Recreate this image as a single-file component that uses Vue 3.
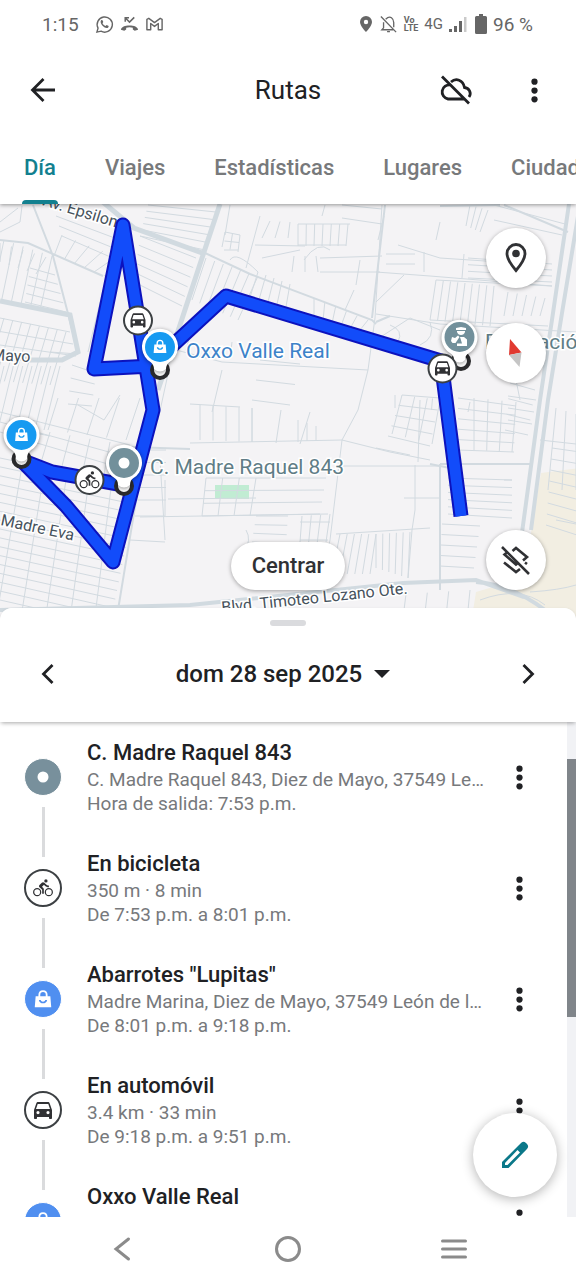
<script setup>
import { ref } from 'vue'

const tabs = ['Día', 'Viajes', 'Estadísticas', 'Lugares', 'Ciudades']
const activeTab = ref('Día')

const stops = [
  { kind: 'place', title: 'C. Madre Raquel 843', detail: 'C. Madre Raquel 843, Diez de Mayo, 37549 Le…', time: 'Hora de salida: 7:53 p.m.' },
  { kind: 'bike', title: 'En bicicleta', detail: '350 m · 8 min', time: 'De 7:53 p.m. a 8:01 p.m.' },
  { kind: 'shop', title: 'Abarrotes "Lupitas"', detail: 'Madre Marina, Diez de Mayo, 37549 León de l…', time: 'De 8:01 p.m. a 9:18 p.m.' },
  { kind: 'car', title: 'En automóvil', detail: '3.4 km · 33 min', time: 'De 9:18 p.m. a 9:51 p.m.' },
  { kind: 'shop', title: 'Oxxo Valle Real', detail: '', time: '' }
]

// Parallel streets: n lines joining segment a-b to segment c-d.
function hatch([ax, ay, bx, by, cx, cy, dx, dy, n]) {
  let path = ''
  for (let i = 0; i < n; i++) {
    const t = n > 1 ? i / (n - 1) : 0
    const p = (u, v) => Math.round((u + (v - u) * t) * 10) / 10
    path += `M${p(ax, bx)} ${p(ay, by)}L${p(cx, dx)} ${p(cy, dy)}`
  }
  return path
}

const streets = [
  [0, 243, 46, 257, 0, 262, 36, 274, 5],
  [4, 240, 52, 256, -8, 298, 40, 310, 6],
  [30, 268, 25, 302, 55, 275, 66, 312, 5],
  [62, 235, 130, 262, 54, 256, 104, 276, 6],
  [56, 216, 62, 236, 120, 240, 122, 262, 3],
  [140, 236, 134, 282, 196, 258, 182, 306, 6],
  [140, 236, 148, 205, 205, 250, 216, 212, 6],
  [172, 205, 165, 240, 172, 205, 165, 240, 1],
  [4, 318, 66, 332, -14, 380, 50, 385, 8],
  [0, 318, 0, 345, 70, 332, 76, 356, 3],
  [50, 352, 20, 430, 78, 354, 50, 436, 2],
  [4, 366, 60, 366, -10, 424, 44, 430, 7],
  [72, 365, 68, 404, 96, 373, 92, 406, 4],
  [0, 412, 0, 432, 130, 445, 128, 470, 3],
  [58, 398, 140, 398, 48, 430, 126, 440, 5],
  [50, 432, 110, 442, 40, 466, 104, 474, 4],
  [0, 458, 0, 600, 138, 487, 110, 625, 17],
  [22, 466, 112, 480, -2, 608, 96, 608, 5],
  [137, 450, 130, 500, 166, 450, 166, 500, 5],
  [135, 516, 130, 540, 165, 516, 165, 542, 2],
  [206, 258, 258, 276, 192, 300, 238, 320, 7],
  [258, 272, 290, 284, 246, 310, 284, 318, 5],
  [314, 298, 368, 320, 314, 316, 360, 330, 6],
  [225, 232, 224, 250, 240, 235, 238, 250, 3],
  [225, 232, 240, 235, 222, 247, 238, 252, 3],
  [270, 221, 290, 222, 262, 238, 288, 238, 3],
  [298, 224, 348, 224, 298, 246, 346, 246, 7],
  [298, 224, 298, 245, 350, 224, 346, 245, 2],
  [255, 245, 262, 258, 305, 246, 300, 250, 2],
  [294, 256, 316, 256, 292, 272, 318, 272, 3],
  [320, 258, 320, 272, 382, 256, 380, 272, 2],
  [342, 205, 342, 218, 382, 209, 382, 224, 2],
  [190, 335, 232, 342, 186, 350, 230, 358, 2],
  [436, 280, 494, 286, 430, 320, 490, 326, 9],
  [436, 280, 430, 320, 552, 286, 548, 326, 2],
  [508, 292, 545, 298, 504, 316, 540, 316, 5],
  [384, 216, 440, 222, 378, 240, 436, 240, 2],
  [386, 254, 386, 264, 415, 254, 415, 264, 2],
  [424, 252, 464, 254, 424, 272, 462, 278, 2],
  [468, 258, 468, 278, 552, 264, 552, 282, 4],
  [470, 205, 488, 210, 466, 226, 480, 232, 4],
  [494, 205, 494, 220, 565, 224, 562, 235, 2],
  [402, 395, 388, 436, 440, 398, 430, 446, 5],
  [402, 395, 440, 400, 392, 434, 432, 444, 4],
  [458, 398, 458, 450, 516, 406, 514, 452, 6],
  [474, 398, 516, 402, 474, 450, 512, 452, 4],
  [508, 396, 508, 420, 536, 400, 532, 424, 3],
  [448, 478, 448, 514, 512, 480, 512, 518, 6],
  [504, 480, 504, 516, 512, 480, 512, 517, 1],
  [442, 524, 440, 566, 480, 526, 474, 568, 5],
  [376, 534, 410, 532, 376, 568, 408, 578, 6],
  [340, 534, 376, 534, 332, 574, 370, 574, 6],
  [256, 516, 252, 542, 288, 516, 286, 544, 4],
  [302, 516, 330, 514, 300, 542, 326, 542, 4],
  [300, 522, 300, 540, 330, 522, 328, 540, 2],
  [206, 478, 256, 478, 202, 516, 250, 516, 4],
  [206, 478, 202, 516, 326, 478, 320, 514, 4],
  [200, 405, 252, 408, 200, 440, 252, 442, 5],
  [252, 408, 310, 412, 252, 442, 300, 444, 3],
  [298, 420, 316, 426, 298, 442, 316, 440, 3],
  [556, 408, 576, 414, 548, 490, 576, 490, 3],
  [552, 448, 546, 525, 580, 452, 580, 536, 8],
  [406, 594, 470, 590, 404, 610, 468, 610, 4],
  [260, 360, 252, 400, 300, 364, 290, 405, 3],
  [395, 395, 470, 402, 395, 408, 468, 412, 3],
  [510, 383, 505, 430, 535, 390, 528, 435, 4]
].map(hatch).join('')
</script>

<template>
  <div class="screen">
    <svg class="defs" aria-hidden="true">
      <symbol id="i-car" viewBox="0 0 24 24">
        <path fill-rule="evenodd" d="M18.92 6.01C18.72 5.42 18.16 4 17.5 4h-11c-.66 0-1.21 1.42-1.42 2.01L3 12v8c0 .55.45 1 1 1h1c.55 0 1-.45 1-1v-1h12v1c0 .55.45 1 1 1h1c.55 0 1-.45 1-1v-8zM7 16.2a1.6 1.6 0 1 1 0-3.2 1.6 1.6 0 0 1 0 3.2zm10 0a1.6 1.6 0 1 1 0-3.2 1.6 1.6 0 0 1 0 3.2zM5 11l1.7-5h10.6L19 11z" />
      </symbol>
      <symbol id="i-bike" viewBox="0 0 24 24">
        <circle cx="15.5" cy="3.5" r="2" />
        <g fill="none" stroke="currentColor" stroke-width="1.5"><circle cx="5" cy="17" r="4.2" /><circle cx="19" cy="17" r="4.2" /></g>
        <path d="M10.8 10.5l2.4-2.4.8.8c1.3 1.3 3 2.1 5.1 2.1V9c-1.5 0-2.7-.6-3.6-1.5l-1.9-1.9c-.5-.4-1-.6-1.6-.6s-1.1.2-1.4.6L7.8 8.4c-.4.4-.6.9-.6 1.4 0 .6.2 1.1.6 1.4L11 14v5h2v-6.2z" />
      </symbol>
      <symbol id="i-bag" viewBox="0 0 24 24">
        <path fill="none" stroke="currentColor" stroke-width="2" d="M8 10V7.5C8 2 16 2 16 7.5V10" />
        <path fill-rule="evenodd" d="M4 9h16l1 12H3zM7.500 13c.5 5 8.500 5 9 0h-2c-.5 2.500-4.500 2.500-5 0z" />
      </symbol>
      <symbol id="i-dots" viewBox="0 0 24 24">
        <circle cx="12" cy="3.5" r="3" /><circle cx="12" cy="12" r="3" /><circle cx="12" cy="20.5" r="3" />
      </symbol>
      <symbol id="i-chevron" viewBox="0 0 24 24">
        <path fill="none" stroke="currentColor" stroke-width="2.8" d="M16.5 3L7.5 12l9 9" />
      </symbol>
    </svg>

    <header class="status">
      <span>1:15</span>
      <svg class="st-icon wa" viewBox="0 0 20 20"><path fill="none" stroke="currentColor" stroke-width="1.5" d="M2 18l1.200-4.200A8 8 0 1 1 6.300 17z" /><path d="M6.300 5.800c.7-.8 1.500-.6 1.800.1l.6 1.500-.8 1.200c.8 1.500 1.800 2.300 3.200 3l1.100-1 1.700.8c.7.3.6 1.300-.2 1.900-3 2-9.400-4.300-7.400-7.500z" /></svg>
      <svg class="st-icon" viewBox="0 0 20 20"><path d="M1 15.500c0-6 18-6 18 0l-3.500 1.200-2-1.500v-1.800c-2-.8-5-.8-7 0v1.800l-2 1.500z" /><path fill="none" stroke="currentColor" stroke-width="1.6" d="M5.500 7V3H9.500M6 3.500l4 4 5-5" /></svg>
      <svg class="st-icon" viewBox="0 0 20 20"><path fill="none" stroke="currentColor" stroke-width="1.5" stroke-linejoin="round" d="M2 15.500V4.500L4 3.500l6 4.500 6-4.500 2 1v11h-4V9l-4 3-4-3v6.500z" /></svg>
      <span class="spacer"></span>
      <svg class="pin-icon" viewBox="0 0 14 18"><path fill-rule="evenodd" d="M7 1a6 6 0 0 0-6 6c0 4 6 10 6 10s6-6 6-10a6 6 0 0 0-6-6zm0 3.800a2.200 2.200 0 1 1 0 4.400 2.200 2.200 0 0 1 0-4.400z" /></svg>
      <svg class="st-icon bell" viewBox="0 0 20 20"><path fill="none" stroke="currentColor" stroke-width="1.4" d="M2 1.500L18 18M7 4.500C12-.5 15.500 4 15.500 8v5M4.800 7.500v6L3 15.500h12M8.500 17.500h3" /></svg>
      <span class="volte"><b>Vo</b><b>LTE</b></span>
      <span class="net">4G</span>
      <svg class="signal" viewBox="0 0 18 16"><path d="M0 13h3v3H0zM5 10h3v6H5zM10 5h3v11h-3z" /><path opacity=".35" d="M15 1h2.500v15H15z" /></svg>
      <svg class="battery" viewBox="0 0 12 20"><path d="M4 0h4v2h2.500Q12 2 12 3.500v15Q12 20 10.500 20h-9Q0 20 0 18.500v-15Q0 2 1.500 2H4z" /></svg>
      <span>96 %</span>
    </header>

    <div class="appbar">
      <button class="icon-btn" aria-label="Atrás">
        <svg width="28" height="28" viewBox="0 0 28 28" fill="none" stroke="currentColor" stroke-width="2.8"><path d="M26 14H4M14.500 3L3.500 14l11 11" /></svg>
      </button>
      <h1>Rutas</h1>
      <button class="icon-btn cloud" aria-label="Sin conexión">
        <svg width="34" height="32" viewBox="0 0 34 32" fill="none" stroke="currentColor" stroke-width="2.8"><path d="M3 2.500l27 27M11.500 11A7 7 0 0 0 9 25h16M12 8c5-4.500 12-2 13.500 5.500 4.500.5 7.500 5.500 4.500 9.500" /></svg>
      </button>
      <button class="icon-btn" aria-label="Más opciones"><svg width="25" height="25"><use href="#i-dots" /></svg></button>
    </div>

    <nav class="tabs">
      <button v-for="t in tabs" :key="t" :class="{ active: t === activeTab }" @click="activeTab = t">{{ t }}</button>
    </nav>

    <section class="map">
      <svg class="canvas" viewBox="0 204 576 404" preserveAspectRatio="xMidYMin slice">
        <path class="sand" d="M541 473L580 468V630H470L476 592 524 578 533 520z" />
        <rect class="park" x="215" y="485" width="34" height="14" />
        <path class="minor" :d="streets" />
        <path class="minor" d="M0 222L18 208M0 232L20 222 22 206M106 278L88 352M120 395L104 420 78 405M382 205L375 318 368 370 358 410M168 374L158 420M222 370L212 412M176 350L222 362 368 370M190 404L240 407M376 314L440 324 576 332M398 245L440 258 500 262M376 340L410 318 440 330M390 325Q404 330 398 342M430 322Q436 338 420 345M376 302L404 275M376 272L430 276 552 286M190 443L342 440 358 410M342 440L390 452 430 460M342 440L330 540 326 560M336 534L430 528M340 466H440M415 465V510L412 530 408 578M440 464H530M246 530Q252 540 244 552M140 517L328 514M168 499L256 498M165 540L160 460M420 400L418 462M376 448L410 455M404 498H440M498 336L512 360 520 400M230 205L225 235M260 216L246 268M325 205L322 216M360 260L356 285M354 290L345 310M304 260Q318 240 330 250M230 260Q236 250 258 272M165 480V516M556 520L576 524M480 600Q520 585 545 605M530 592Q560 590 576 585M540 440L576 444" />
        <path class="street" d="M33 205L53 256 78 352M0 240L28 243 103 276M205 253L250 274 372 320 376 324M440 464V590M440 464H530M147 434L118 610M430 464L450 468M500 205L440 206M385 205L372 318M190 449L130 447M504 205L568 232M376 322L390 316" />
        <path class="road" d="M0 301L70 315 78 352 62 360H30L0 355M98 198L134 228 205 254M220 204L203 255 180 325 158 390" />
        <path class="road wide" d="M569 204L553 313 540 400 521 540M580 204L562 313 548 400 531 530M0 610L190 605 403 583 476 580 524 597M476 582Q510 584 545 610" />

        <g class="street-label">
          <text transform="translate(42 205) rotate(17)">Av. Epsilon</text>
          <text transform="translate(-9 360) rotate(3)">Mayo</text>
          <text transform="translate(0 525) rotate(12)">Madre Eva</text>
          <text transform="translate(222 613) rotate(-6)">Blvd. Timoteo Lozano Ote.</text>
        </g>

        <g class="route-edge">
          <path d="M21 460L52 472 124 485" /><path d="M21 460L66 506 113 562 153 410 123 225 94 369 152 366" /><path class="butt" d="M160 357L226 296 441 361 461 516" />
        </g>
        <g class="route-fill">
          <path d="M21 460L52 472 124 485" /><path d="M21 460L66 506 113 562 153 410 123 225 94 369 152 366" /><path class="butt" d="M160 357L226 296 441 361 461 516" />
        </g>

        <g class="anchor"><circle cx="21.5" cy="459" r="8" /><circle cx="124" cy="486" r="8" /><circle cx="160" cy="370" r="8" /><circle cx="461" cy="361" r="8" /></g>

        <g class="stop-label">
          <text class="blue" x="186" y="358">Oxxo Valle Real</text>
          <text x="150" y="474">C. Madre Raquel 843</text>
          <text x="485" y="349">Delegación</text>
        </g>

        <g class="pin">
          <path d="M16 459Q16 453 12 450a18 18 0 1 1 19 0Q27 453 27 459 21.500 464 16 459z" />
          <path d="M118 485Q118 480 114.500 478a18 18 0 1 1 19 0Q130 480 130 485 124 490 118 485z" />
          <path d="M154 369Q154 365 150.500 362a18 18 0 1 1 19 0Q166 365 166 369 160 374 154 369z" />
          <path d="M454 360Q454 355 450 353a18 18 0 1 1 19 0Q465 355 465 360 460 365 454 360z" />
        </g>
        <circle class="sky" cx="21.5" cy="435" r="15" /><circle class="sky" cx="160" cy="347" r="15" />
        <circle class="slate" cx="124" cy="463" r="15" /><circle class="slate" cx="459.5" cy="337" r="15" />
        <circle class="white" cx="124" cy="463" r="5.5" />
        <g class="white"><use href="#i-bag" x="13" y="426" width="17" height="17" /><use href="#i-bag" x="151.5" y="338" width="17" height="17" /></g>
        <path class="white" d="M456 328l5-1 5 1v2h-10zM457 331h8v1q-1 3-4 3t-4-3zM460 337h4l3 2.500v6.500h-10v-2.500h5zM452 337l3 1 3-2.500 1.500 1.500-4 6h-3l-1.500-2z" />

        <g class="badge"><circle cx="138" cy="320.5" r="14" /><circle cx="442.5" cy="368.5" r="14" /><circle cx="89.5" cy="480" r="14" /></g>
        <g class="ink"><use href="#i-car" x="128" y="310" width="20" height="20" /><use href="#i-car" x="432.5" y="358" width="20" height="20" /><use href="#i-bike" x="79" y="470" width="21" height="20" /></g>
      </svg>

      <button class="round place" aria-label="Lugares">
        <svg width="24" height="32" viewBox="0 0 24 32"><path fill="none" stroke="currentColor" stroke-width="2.8" d="M12 2.500a9 9 0 0 0-9 9C3 18 12 28.500 12 28.500S21 18 21 11.500a9 9 0 0 0-9-9z" /><circle cx="12" cy="11.5" r="3.8" /></svg>
      </button>
      <button class="round compass" aria-label="Brújula">
        <svg width="18" height="32" viewBox="0 0 18 32"><path fill="#e13a31" d="M3 2L14.500 15.500 2 18z" /><path fill="#c5c5c5" d="M14.500 15.500L2 18l10.500 12z" /></svg>
      </button>
      <button class="round layers" aria-label="Capas">
        <svg width="32" height="32" viewBox="0 0 32 32" fill="none" stroke="currentColor" stroke-width="2.6"><path d="M2 3l27 27M12.500 7L16 4l11 9-4 3.500M7 8.500L4.500 10.500 16 20.500l2-1.500M4 18.500l12 9.500 4-3" /><path d="M25 18.500l2 1.500" /></svg>
      </button>
      <button class="center-btn">Centrar</button>
    </section>

    <section class="sheet">
      <div class="sheet-head">
        <span class="handle"></span>
        <div class="date-row">
          <button class="icon-btn" aria-label="Día anterior"><svg width="24" height="24"><use href="#i-chevron" /></svg></button>
          <button class="date">dom 28 sep 2025<span class="caret"></span></button>
          <button class="icon-btn next" aria-label="Día siguiente"><svg width="24" height="24"><use href="#i-chevron" /></svg></button>
        </div>
      </div>

      <div class="timeline">
        <ol>
          <li v-for="(s, i) in stops" :key="i">
            <div class="rail">
              <span class="seg top" :class="{ off: i === 0 }"></span>
              <span class="dot" :class="s.kind">
                <svg v-if="s.kind === 'place'" width="12" height="12" viewBox="0 0 12 12"><circle cx="6" cy="6" r="5.5" /></svg>
                <svg v-else-if="s.kind === 'bike'" width="20" height="20"><use href="#i-bike" /></svg>
                <svg v-else-if="s.kind === 'car'" width="24" height="24"><use href="#i-car" /></svg>
                <svg v-else width="22" height="22"><use href="#i-bag" /></svg>
              </span>
              <span class="seg bottom"></span>
            </div>
            <div class="body">
              <h2>{{ s.title }}</h2>
              <p>{{ s.detail }}</p>
              <p>{{ s.time }}</p>
            </div>
            <button class="icon-btn more" aria-label="Opciones"><svg width="25" height="25"><use href="#i-dots" /></svg></button>
          </li>
        </ol>
        <div class="track"><span class="thumb"></span></div>
        <button class="fab" aria-label="Editar">
          <svg width="30" height="30" viewBox="0 0 30 30"><path fill-rule="evenodd" d="M2 22L20.500 3.500Q23 .5 26 3l1 1q2.500 3-.5 5.500L8.500 28H2zM5 23v2h2.500L20 12.500 17.500 10z" /></svg>
        </button>
      </div>
    </section>

    <footer class="sysnav">
      <button aria-label="Atrás"><svg width="18" height="26" viewBox="0 0 18 26"><path d="M15.500 3L3 13l12.500 10" /></svg></button>
      <button aria-label="Inicio"><svg width="28" height="28" viewBox="0 0 28 28"><circle cx="14" cy="14" r="11.5" /></svg></button>
      <button aria-label="Recientes"><svg width="28" height="24" viewBox="0 0 28 24"><path d="M2.500 4h23M2.500 12h23M2.500 20h23" /></svg></button>
    </footer>
  </div>
</template>

<style>
body { background: #fff; }
</style>

<style scoped>
* { box-sizing: border-box; }
.screen { display: flex; flex-direction: column; height: 100vh; overflow: hidden; background: #fff; color: #202124; font-family: Roboto, "Liberation Sans", sans-serif; }
.defs { position: absolute; width: 0; height: 0; }
svg { display: block; fill: currentColor; }
svg[fill="none"] { fill: none; }
button { border: 0; padding: 0; margin: 0; background: none; color: inherit; font: inherit; }

.status { flex: none; height: 48px; display: flex; align-items: center; gap: 6px; padding: 0 43px 0 42px; color: #666; font-size: 19px; }
.st-icon { width: 19px; height: 19px; }
.wa { margin-left: 10px; }
.spacer { flex: 1; }
.pin-icon { width: 14px; height: 18px; }
.volte { display: flex; flex-direction: column; font-size: 9px; line-height: 8px; }
.net { font-size: 15px; }
.signal { width: 18px; height: 16px; }
.battery { width: 12px; height: 20px; margin-left: 2px; }

.appbar { flex: none; height: 84px; display: flex; align-items: center; position: relative; z-index: 3; padding: 0 4px 0 5px; background: #fff; }
.appbar h1 { position: absolute; left: 0; right: 0; margin: 0; text-align: center; font: 400 26px/32px Roboto, sans-serif; pointer-events: none; }
.icon-btn { width: 76px; height: 48px; display: flex; align-items: center; justify-content: center; flex: none; }
.cloud { margin-left: auto; width: 80px; }

.tabs { flex: none; height: 72px; display: flex; gap: 49px; padding: 0 24px; overflow: hidden; position: relative; z-index: 2; background: #fff; box-shadow: 0 1px 4px rgba(0, 0, 0, .4); font: 500 22px/24px Roboto, sans-serif; color: #77797b; }
.tabs button { flex: none; position: relative; }
.tabs .active { color: #12808f; }
.tabs .active::after { content: ""; position: absolute; left: -2px; right: -2px; bottom: 0; height: 4px; border-radius: 4px 4px 0 0; background: #12808f; }

.map { flex: 420 1 0; position: relative; overflow: hidden; background: #f4f3f5; }
.canvas { position: absolute; inset: 0; width: 100%; height: calc(100% - 16px); overflow: visible; }
.sand { fill: #f2eee2; }
.park { fill: #c1ecd3; }
.minor, .street, .road { fill: none; stroke: #d2dae0; stroke-width: 1; }
.street { stroke-width: 2; }
.road { stroke: #d1dae0; stroke-width: 5; }
.wide { stroke-width: 4; }
.street-label text { font: 400 16px Roboto, sans-serif; fill: #46525c; stroke: #fff; stroke-width: 3; paint-order: stroke; }
.stop-label text { font: 400 21px Roboto, sans-serif; fill: #607d86; stroke: #fff; stroke-width: 3; paint-order: stroke; }
.stop-label .blue { fill: #3d83c9; }
.route-edge path, .route-fill path { fill: none; stroke: #0c12bd; stroke-width: 15; stroke-linecap: round; stroke-linejoin: round; }
.route-fill path { stroke: #124cfa; stroke-width: 11; }
.route-edge .butt, .route-fill .butt { stroke-linecap: butt; }
.anchor { fill: #fff; stroke: #2b2b2d; stroke-width: 4; }
.pin { fill: #fff; filter: drop-shadow(0 1px 2px rgba(0, 0, 0, .45)); }
.sky { fill: #169af1; }
.slate { fill: #72909b; }
.white { fill: #fff; color: #fff; }
.badge { fill: #fff; stroke: #3c4043; stroke-width: 2; }
.ink { fill: #303134; color: #303134; }

.round { position: absolute; right: 30px; width: 60px; height: 60px; border-radius: 50%; background: #fff; box-shadow: 0 1px 4px rgba(0, 0, 0, .35); display: flex; align-items: center; justify-content: center; color: #303134; }
.place { top: 24px; }
.compass { top: 119px; }
.layers { bottom: 34px; }
.center-btn { position: absolute; left: 50%; bottom: 34px; width: 114px; margin-left: -57px; height: 48px; border-radius: 24px; background: #fff; box-shadow: 0 1px 4px rgba(0, 0, 0, .35); font: 500 22px/24px Roboto, sans-serif; color: #303134; }

.sheet { flex: 609 1 0; min-height: 0; margin-top: -16px; display: flex; flex-direction: column; position: relative; z-index: 1; background: #fff; border-radius: 12px 12px 0 0; }
.sheet-head { flex: none; height: 114px; display: flex; flex-direction: column; align-items: center; position: relative; z-index: 2; background: #fff; border-radius: 12px 12px 0 0; box-shadow: 0 2px 4px -1px rgba(0, 0, 0, .35); }
.handle { width: 36px; height: 6px; margin-top: 12px; border-radius: 3px; background: #dadbde; }
.date-row { align-self: stretch; margin-top: 24px; padding: 0 10px; display: flex; justify-content: space-between; align-items: center; }
.date { display: flex; align-items: center; gap: 12px; margin-right: 10px; font: 500 24px/28px Roboto, sans-serif; }
.caret { border: 8px solid transparent; border-top-color: #202124; border-bottom: 0; }
.next svg { transform: rotate(180deg); }

.timeline { flex: 1; min-height: 0; position: relative; overflow: hidden; }
ol { list-style: none; margin: 0; padding: 0; }
li { height: 111px; display: flex; align-items: flex-start; padding: 0 19px 0 24px; }
.rail { width: 38px; height: 111px; flex: none; display: flex; flex-direction: column; align-items: center; }
.seg { width: 3px; background: #dadbdd; }
.seg.top { height: 24px; margin-bottom: 12px; }
.seg.bottom { flex: 1; margin-top: 11px; }
.seg.off { background: none; }
.dot { width: 38px; height: 38px; border-radius: 50%; display: flex; align-items: center; justify-content: center; color: #fff; border: 1px solid #fff; }
.dot.place { background: #78909c; }
.dot.shop { background: #508ff0; }
.dot.bike, .dot.car { border: 2px solid #3c4043; color: #303134; }
.body { flex: 1; min-width: 0; padding: 18px 0 0 25px; }
.body h2 { margin: 0 0 2px; font: 500 22px/26px Roboto, sans-serif; }
.body p { margin: 0; font-size: 19px; line-height: 24px; min-height: 24px; color: #77797c; white-space: nowrap; }
.more { margin-top: 31px; }
.track { position: absolute; right: 0; top: 0; bottom: 0; width: 9px; background: #f1f2f5; }
.thumb { position: absolute; left: 0; right: 0; top: 37px; height: 258px; background: #80858a; }
.fab { position: absolute; right: 19px; bottom: 20px; width: 84px; height: 84px; border-radius: 50%; background: #fff; box-shadow: 0 2px 12px rgba(0, 0, 0, .3); color: #0b7889; display: flex; align-items: center; justify-content: center; }

.sysnav { flex: none; height: 63px; display: flex; padding: 0 39px; background: #fff; }
.sysnav button { flex: 1; display: flex; align-items: center; justify-content: center; color: #8b8b8b; }
.sysnav svg { fill: none; stroke: currentColor; stroke-width: 3; stroke-linecap: round; }
</style>
